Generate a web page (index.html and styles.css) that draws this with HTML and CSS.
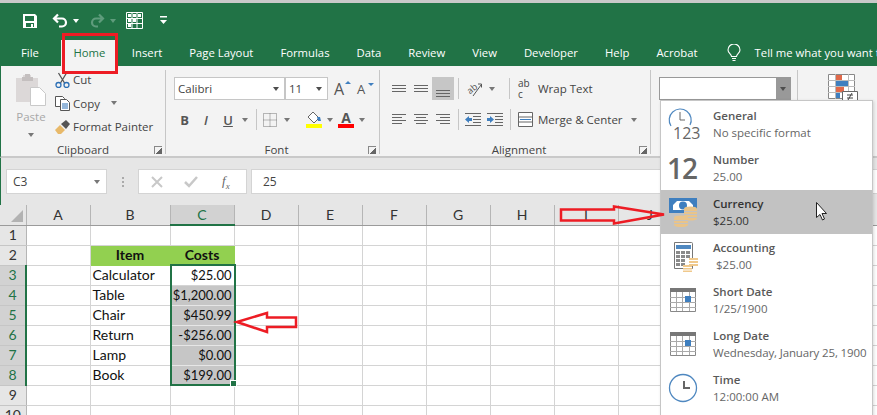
FILE: index.html
```html
<!DOCTYPE html>
<html lang="en">
<head>
<meta charset="utf-8">
<title>Excel number format</title>
<link rel="stylesheet" href="styles.css">
</head>
<body>
<div class="app">
  <div class="topstrip"></div>
  <header class="titlebar">
    <div class="qat">
      <svg class="q-save" width="16" height="16" viewBox="0 0 16 16"><path fill="#fff" d="M1 1h12l2 2v12H1z"/><path fill="#217346" d="M3 3h9v5H3zM4 10h8v4H4z"/><path fill="#fff" d="M9 11h2v3H9z"/></svg>
      <svg class="q-undo" width="17" height="15" viewBox="0 0 17 15"><path fill="none" stroke="#fff" stroke-width="2.200" d="M6 1.500L2 5.500l4 4M2 5.500h8a4 4 0 0 1 0 8H7"/></svg>
      <span class="caret caret-w q-c1"></span>
      <svg class="q-redo" width="15" height="15" viewBox="0 0 15 15"><path fill="none" stroke="#5f9c7c" stroke-width="2.200" d="M9 1.500l4 4-4 4M13 5.500H6a4 4 0 0 0 0 8h2"/></svg>
      <span class="caret caret-d q-c2"></span>
      <svg class="q-grid" width="17" height="17" viewBox="0 0 17 17"><path fill="none" stroke="#fff" d="M.5.500h16v16H.5zM.5 6.500h16M.5 11.500h16M6 .5v16M11 .5v16"/><path fill="#fff" d="M2 2h3v3H2zM7 2h3v3H7zM12 2h3v3h-3zM2 7h3v3H2zM2 12h3v3H2zM7 7h3v3H7z"/></svg>
      <svg class="q-more" width="9" height="9" viewBox="0 0 9 9"><path fill="#fff" d="M1 0h7v1.500H1zM1 4h7L4.500 8z"/></svg>
    </div>
    <nav class="tabs">
      <span class="tab tab-file">File</span>
      <span class="tab tab-home">Home</span>
      <span class="tab">Insert</span>
      <span class="tab">Page Layout</span>
      <span class="tab">Formulas</span>
      <span class="tab">Data</span>
      <span class="tab">Review</span>
      <span class="tab">View</span>
      <span class="tab">Developer</span>
      <span class="tab">Help</span>
      <span class="tab">Acrobat</span>
      <svg class="bulb" width="14" height="18" viewBox="0 0 14 18"><path fill="none" stroke="#fff" stroke-width="1.100" d="M4.500 12.500C4.500 10 1 9 1 6a6 6 0 0 1 12 0c0 3-3.500 4-3.500 6.500zM5 14.500h4M5.500 16.500h3"/></svg>
      <span class="tab tab-tell">Tell me what you want to do</span>
    </nav>
  </header>

  <section class="ribbon">
    <div class="group g-clip">
      <div class="group-body clip-body">
        <div class="paste">
          <svg width="30" height="32" viewBox="0 0 30 32"><path fill="#dcd8d8" d="M0 4h7V1h8v3h7v24H0z"/><path fill="#c4bfbf" d="M9 0h5v3h3v4H6V3h3z"/><path fill="#fff" stroke="#c9c9c9" d="M14.500 13.500h9l6 6v12h-15z"/></svg>
          <span class="paste-label">Paste</span>
          <span class="caret caret-g"></span>
        </div>
        <div class="clip-list">
          <div class="clip-row">
            <svg width="15" height="16" viewBox="0 0 15 16"><path fill="none" stroke="#555" stroke-width="1.300" d="M3.500 1l6 10M11.500 1l-6 10"/><circle cx="3.500" cy="13" r="2.500" fill="none" stroke="#2b6fb5" stroke-width="1.300"/><circle cx="11.500" cy="13" r="2.500" fill="none" stroke="#2b6fb5" stroke-width="1.300"/></svg>
            <span>Cut</span>
          </div>
          <div class="clip-row">
            <svg width="15" height="16" viewBox="0 0 15 16"><path fill="#fff" stroke="#555" d="M.5 1.500h7l2 2v8h-9z"/><path fill="#fff" stroke="#555" d="M5.500 4.500h6l3 3v8h-9z"/><path stroke="#2b6fb5" d="M7 9h6M7 11h6M7 13h6"/></svg>
            <span>Copy</span>
            <span class="caret caret-g copy-caret"></span>
          </div>
          <div class="clip-row">
            <svg width="15" height="16" viewBox="0 0 15 16"><path fill="#e8b96a" d="M0 11l5-5 5 5-4 4H3z"/><path fill="#555" d="M6 5l5-4 4 4-4 5z"/></svg>
            <span>Format Painter</span>
          </div>
        </div>
      </div>
      <div class="group-label">Clipboard<i class="launcher"></i></div>
    </div>

    <div class="group g-font">
      <div class="group-body">
        <div class="tool-row first">
          <div class="combo combo-font">Calibri<span class="caret caret-d"></span></div>
          <div class="combo combo-size">11<span class="caret caret-d"></span></div>
          <span class="grow-a big">A<i class="up"></i></span>
          <span class="grow-a small">A<i class="down"></i></span>
        </div>
        <div class="tool-row second">
          <span class="slot s21 fmt fmt-b">B</span>
          <span class="slot s22 fmt fmt-i">I</span>
          <span class="slot s22 fmt fmt-u">U</span>
          <span class="slot s12"><span class="caret caret-g"></span></span>
          <i class="vsep sep-u"></i>
          <span class="slot s20">
            <svg width="14" height="14" viewBox="0 0 14 14"><path fill="none" stroke="#777" stroke-dasharray="1 1" d="M.5.500h13v13H.5zM7 .5v13M.5 7h13"/></svg>
          </span>
          <span class="slot s12 border-caret"><span class="caret caret-g"></span></span>
          <span class="slot s20 fill-slot">
            <svg width="16" height="17" viewBox="0 0 16 17"><path fill="#fff" stroke="#666" d="M7 1l6 6-5 5-6-6z"/><path fill="#3f7fbf" d="M11 6h3l1 4h-3z"/><path fill="#ff0" d="M0 13h16v4H0z"/></svg>
          </span>
          <span class="slot s12 fill-caret"><span class="caret caret-g"></span></span>
          <span class="slot s20 color-slot">
            <span class="font-color">A</span>
          </span>
          <span class="slot s12 color-caret"><span class="caret caret-g"></span></span>
        </div>
      </div>
      <div class="group-label">Font<i class="launcher"></i></div>
    </div>

    <div class="group g-align">
      <div class="group-body">
        <div class="tool-row first">
          <span class="slot s22"><svg width="14" height="8" viewBox="0 0 14 8"><path stroke="#666" d="M0 .5h14M0 3.500h14M0 6.500h14"/></svg></span>
          <span class="slot s22"><svg width="14" height="8" viewBox="0 0 14 8"><path stroke="#666" d="M0 .5h14M0 3.500h14M0 6.500h14"/></svg></span>
          <span class="slot s22 selected"><svg class="down-lines" width="14" height="8" viewBox="0 0 14 8"><path stroke="#666" d="M0 .5h14M0 3.500h14M0 6.500h14"/></svg></span>
          <i class="vsep"></i>
          <span class="slot s24"><svg class="orient" width="17" height="16" viewBox="0 0 17 16"><text class="ab-text" x="1" y="11" transform="rotate(-40 6 8)">ab</text><path fill="none" stroke="#555" d="M7 15L15 4M12 3h3.500v3.500"/></svg></span>
          <span class="slot s12 orient-caret"><span class="caret caret-g"></span></span>
          <i class="vsep sep-wrap"></i>
          <div class="text-btn wrap-btn">
            <span class="wrap-ic">ab<span class="wrap-c">c</span></span>
            <span>Wrap Text</span>
          </div>
        </div>
        <div class="tool-row second">
          <span class="slot s22"><svg width="14" height="11" viewBox="0 0 14 11"><path stroke="#666" d="M0 .5h14M0 3.500h10M0 6.500h14M0 9.500h10"/></svg></span>
          <span class="slot s22"><svg width="14" height="11" viewBox="0 0 14 11"><path stroke="#666" d="M0 .5h14M2 3.500h10M0 6.500h14M2 9.500h10"/></svg></span>
          <span class="slot s22"><svg width="14" height="11" viewBox="0 0 14 11"><path stroke="#666" d="M0 .5h14M4 3.500h10M0 6.500h14M4 9.500h10"/></svg></span>
          <i class="vsep"></i>
          <span class="slot s22"><svg width="16" height="13" viewBox="0 0 16 13"><path stroke="#666" d="M0 .5h16M8 3.500h8M8 6.500h8M8 9.500h8M0 12.500h16"/><path fill="#3f7fbf" d="M0 6.500L4 3v2h3v3H4v2z"/></svg></span>
          <span class="slot s22"><svg width="16" height="13" viewBox="0 0 16 13"><path stroke="#666" d="M0 .5h16M8 3.500h8M8 6.500h8M8 9.500h8M0 12.500h16"/><path fill="#3f7fbf" d="M7 6.500L3 3v2H0v3h3v2z"/></svg></span>
          <i class="vsep sep-merge"></i>
          <div class="text-btn merge-btn">
            <svg width="15" height="15" viewBox="0 0 15 15"><path fill="#fff" stroke="#666" d="M.5.500h14v14H.5zM.5 5h14M.5 10h14"/><path stroke="#3f7fbf" d="M2 7.500h11"/></svg>
            <span>Merge &amp; Center</span>
            <span class="caret caret-g merge-caret"></span>
          </div>
        </div>
      </div>
      <div class="group-label">Alignment<i class="launcher"></i></div>
    </div>

    <div class="group g-num">
      <div class="group-body">
        <div class="tool-row first">
          <div class="num-combo"><span class="num-drop"><span class="caret caret-d"></span></span></div>
        </div>
      </div>
    </div>

    <div class="g-styles">
      <svg width="30" height="28" viewBox="0 0 30 28"><path fill="#fff" stroke="#888" d="M.5.500h26v24H.5z"/><path fill="#e0694a" d="M8 1h6v5H8zM8 13h8v5H8z"/><path fill="#3f7fbf" d="M8 7h12v5H8zM8 19h4v5H8z"/><path stroke="#bbb" d="M7.500 0v25M20.500 0v25M0 6.500h27M0 12.500h27M0 18.500h27"/><path fill="#fff" stroke="#666" d="M14.500 17.500h15v11h-15z"/><path stroke="#444" d="M19 21h6M19 24h6M24 19l-4 7"/></svg>
    </div>
  </section>

  <section class="formula">
    <div class="namebox">C3<span class="caret caret-g"></span></div>
    <span class="dots"></span>
    <div class="fx-btns">
      <svg width="12" height="12" viewBox="0 0 12 12"><path stroke="#c8c8c8" stroke-width="2" d="M1 1l10 10M11 1L1 11"/></svg>
      <svg width="14" height="12" viewBox="0 0 14 12"><path fill="none" stroke="#c8c8c8" stroke-width="2.500" d="M1 6l4 4 8-9"/></svg>
      <span class="fx">f<sub>x</sub></span>
    </div>
    <div class="fx-input">25</div>
  </section>

  <section class="sheet">
    <table class="grid">
      <colgroup>
        <col class="c-row"><col class="c-a"><col class="c-b"><col class="c-n"><col class="c-n"><col class="c-n"><col class="c-n"><col class="c-n"><col class="c-n"><col class="c-n"><col class="c-n"><col class="c-rest">
      </colgroup>
      <thead>
        <tr>
          <th class="corner"><i class="corner-tri"></i></th><th>A</th><th>B</th><th class="col-sel">C</th><th>D</th><th>E</th><th>F</th><th>G</th><th>H</th><th>I</th><th>J</th><th></th>
        </tr>
      </thead>
      <tbody>
        <tr><th>1</th><td></td><td></td><td></td><td></td><td></td><td></td><td></td><td></td><td></td><td></td><td></td></tr>
        <tr><th>2</th><td></td><td class="hd">Item</td><td class="hd">Costs</td><td></td><td></td><td></td><td></td><td></td><td></td><td></td><td></td></tr>
        <tr><th class="row-sel">3</th><td></td><td>Calculator</td><td class="num">$25.00</td><td></td><td></td><td></td><td></td><td></td><td></td><td></td><td></td></tr>
        <tr><th class="row-sel">4</th><td></td><td>Table</td><td class="num sel">$1,200.00</td><td></td><td></td><td></td><td></td><td></td><td></td><td></td><td></td></tr>
        <tr><th class="row-sel">5</th><td></td><td>Chair</td><td class="num sel">$450.99</td><td></td><td></td><td></td><td></td><td></td><td></td><td></td><td></td></tr>
        <tr><th class="row-sel">6</th><td></td><td>Return</td><td class="num sel">-$256.00</td><td></td><td></td><td></td><td></td><td></td><td></td><td></td><td></td></tr>
        <tr><th class="row-sel">7</th><td></td><td>Lamp</td><td class="num sel">$0.00</td><td></td><td></td><td></td><td></td><td></td><td></td><td></td><td></td></tr>
        <tr><th class="row-sel">8</th><td></td><td>Book</td><td class="num sel">$199.00</td><td></td><td></td><td></td><td></td><td></td><td></td><td></td><td></td></tr>
        <tr><th>9</th><td></td><td></td><td></td><td></td><td></td><td></td><td></td><td></td><td></td><td></td><td></td></tr>
        <tr><th>10</th><td></td><td></td><td></td><td></td><td></td><td></td><td></td><td></td><td></td><td></td><td></td></tr>
      </tbody>
    </table>
    <div class="selection"><i class="handle"></i></div>
  </section>

  <div class="menu">
    <div class="item">
      <div class="ic">
        <svg width="32" height="32" viewBox="0 0 32 32"><path fill="none" stroke="#4f88c0" stroke-width="1.200" d="M4 18a11 11 0 1 1 19-1"/><path fill="none" stroke="#666" d="M13 4v8h5"/></svg>
        <span class="ic-123">123</span>
      </div>
      <div class="tx"><b>General</b><span>No specific format</span></div>
    </div>
    <div class="item">
      <div class="ic"><span class="ic-12">12</span></div>
      <div class="tx"><b>Number</b><span>25.00</span></div>
    </div>
    <div class="item current">
      <div class="ic">
        <svg width="32" height="32" viewBox="0 0 32 32"><path fill="#3f7fbf" d="M2 2h28v15H2z"/><path fill="#fff" d="M6 5h20v9H6z"/><path fill="#3f7fbf" d="M5 5h5l-5 5zM27 5h-5l5 5z"/><circle cx="16" cy="9.500" r="4" fill="#3f7fbf"/><path fill="#e9c48a" d="M17 12.500a6.500 2 0 0 1 13 0v10a6.500 2 0 0 1-13 0z"/><path stroke="#c2c2c2" d="M17 15.500h13M17 18.500h13M17 21.500h13"/><path fill="#e9c48a" d="M7 21.500a7 2 0 0 1 14 0v7.500a7 2 0 0 1-14 0z"/><path stroke="#c2c2c2" d="M7 24.500h14M7 27.500h14"/></svg>
      </div>
      <div class="tx"><b>Currency</b><span>$25.00</span></div>
    </div>
    <div class="item">
      <div class="ic">
        <svg width="32" height="32" viewBox="0 0 32 32"><path fill="#fff" stroke="#777" d="M7.500 2.500h17a1 1 0 0 1 1 1v25h-18z"/><path fill="#4f88c0" d="M9 5h15v4H9z"/><path fill="#8a8a8a" d="M9 11h4v3H9zM14 11h4v3h-4zM19 11h4v3h-4zM9 15h4v3H9zM14 15h4v3h-4zM19 15h4v3h-4zM9 19h4v3H9zM14 19h4v3h-4zM9 23h4v3H9zM14 23h4v3h-4z"/><path fill="#f0c98c" d="M22 18h9v8h-9zM16 25h9v7h-9z"/><path stroke="#fff" d="M22 20.500h9M22 23.500h9M16 27.500h9M16 30h9"/></svg>
      </div>
      <div class="tx"><b>Accounting</b><span>&nbsp;$25.00</span></div>
    </div>
    <div class="item">
      <div class="ic">
        <svg width="32" height="32" viewBox="0 0 32 32"><path fill="#fff" stroke="#888" d="M3.500 4.500h25v23h-25z"/><path fill="#777" d="M3 4h26v4H3z"/><path stroke="#aaa" d="M3 13.500h26M3 18.500h26M3 23.500h26M9.500 8v19M15.500 8v19M22.500 8v19"/><path fill="#3f7fbf" d="M18 12h6v6h-6z"/></svg>
      </div>
      <div class="tx"><b>Short Date</b><span>1/25/1900</span></div>
    </div>
    <div class="item">
      <div class="ic">
        <svg width="32" height="32" viewBox="0 0 32 32"><path fill="#fff" stroke="#888" d="M3.500 4.500h25v23h-25z"/><path fill="#777" d="M3 4h26v4H3z"/><path stroke="#aaa" d="M3 13.500h26M3 18.500h26M3 23.500h26M9.500 8v19M15.500 8v19M22.500 8v19"/><path fill="#3f7fbf" d="M18 12h6v6h-6z"/></svg>
      </div>
      <div class="tx"><b>Long Date</b><span class="tight">Wednesday, January 25, 1900</span></div>
    </div>
    <div class="item">
      <div class="ic">
        <svg width="32" height="32" viewBox="0 0 32 32"><circle cx="16" cy="16" r="13.500" fill="#fff" stroke="#4f88c0" stroke-width="1.300"/><path fill="none" stroke="#666" stroke-width="2" d="M17 9v7h6"/></svg>
      </div>
      <div class="tx"><b>Time</b><span>12:00:00 AM</span></div>
    </div>
  </div>

  <svg class="marks" width="877" height="415" viewBox="0 0 877 415">
    <path class="mark" d="M63.500 34.500h53v38h-53z"/>
    <path class="arrow" d="M561 209.500h53v-3l50 8-50 9v-3h-53z"/>
    <path class="arrow" d="M237 322l30-9v4.500h29v9.500h-29v5z"/>
    <path fill="#fff" stroke="#222" d="M816.500 202.500v15l3.500-3 2.500 5.500 2-1-2.500-5.500h4.500z"/>
  </svg>
</div>
</body>
</html>
```

FILE: styles.css
```css
* { box-sizing: border-box; }
html, body { margin: 0; padding: 0; }
body { width: 877px; height: 415px; overflow: hidden; background: #fff; font-family: "Open Sans", "Liberation Sans", sans-serif; font-size: 11.500px; color: #444; }
.app { position: relative; width: 877px; height: 415px; overflow: hidden; }

.topstrip { height: 3px; background: #c9c9c9; }
.titlebar { height: 63px; background: #217346; color: #fff; display: flex; flex-direction: column; }
.qat { height: 37px; display: flex; align-items: center; position: relative; padding-left: 22px; padding-bottom: 2px; }
.q-undo { margin-left: 14px; }
.q-c1 { margin-left: 4px; }
.q-redo { margin-left: 11px; }
.q-c2 { margin-left: 5px; }
.q-grid { margin-left: 10px; }
.q-more { margin-left: 16px; }

.tabs { flex: 1; display: flex; align-items: center; padding-left: 7.500px; overflow: hidden; font-size: 11.300px; }
.tab { padding: 0 13.500px; color: #fff; white-space: nowrap; line-height: 26px; flex: none; }
.tab-home { background: #f3f3f3; color: #217346; padding: 0 13px 0 12px; margin: 0 0 0 9px; height: 26px; }
.bulb { margin-left: 16px; flex: none; }
.tab-tell { padding-left: 13.500px; }

.caret { display: inline-block; width: 0; height: 0; border-left: 3.500px solid transparent; border-right: 3.500px solid transparent; border-top: 4px solid #666; }
.caret-w { border-top-color: #fff; }
.caret-d { border-top-color: #4d4d4d; }
.caret-g { border-top-color: #777; }
.q-c2.caret-d { border-top-color: #5f9c7c; }

.ribbon { height: 92px; background: #f3f3f3; border-bottom: 2px solid #c9c9c9; border-left: 1px solid #217346; padding-top: 4px; display: flex; }
.group { height: 84px; border-right: 1px solid #c6c6c6; display: flex; flex-direction: column; flex: none; }
.g-clip { width: 165px; }
.g-font { width: 214px; padding-left: 8px; }
.g-align { width: 271px; padding-left: 8px; }
.g-num { width: 147px; padding-left: 8px; }
.g-styles { padding: 4px 0 0 30px; }
.group-body { height: 73px; }
.group-label { height: 11px; line-height: 14px; text-align: center; position: relative; color: #444; }
.launcher { position: absolute; right: 3px; top: 3px; width: 8px; height: 8px; border-left: 1px solid #888; border-top: 1px solid #888; background: linear-gradient(135deg, transparent 55%, #666 55%); }

.clip-body { display: flex; }
.paste { width: 32px; margin-left: 14px; padding-top: 4px; display: flex; flex-direction: column; align-items: center; }
.paste-label { color: #a8a8a8; line-height: 16px; margin-top: 3px; }
.paste .caret { margin-top: 8px; }
.clip-list { margin-left: 8px; margin-top: -2px; display: flex; flex-direction: column; }
.clip-row { height: 23.500px; display: flex; align-items: center; gap: 3px; white-space: nowrap; }
.copy-caret { margin-left: 8px; }

.tool-row { display: flex; align-items: center; height: 23px; }
.first { margin-top: 7px; }
.second { margin-top: 8px; }
.combo { height: 23px; background: #fff; border: 1px solid #c6c6c6; display: flex; align-items: center; justify-content: space-between; padding: 0 5px 0 3px; }
.combo-font { width: 111px; }
.combo-size { width: 43px; }
.grow-a { position: relative; display: block; color: #555; }
.grow-a.big { font-size: 16px; margin-left: 6px; width: 23px; }
.grow-a.small { font-size: 13px; width: 16px; }
.grow-a i { position: absolute; top: 3px; left: 11px; border-left: 3px solid transparent; border-right: 3px solid transparent; }
.up { border-bottom: 3px solid #3f7fbf; }
.down { border-top: 3px solid #3f7fbf; }

.slot { display: flex; align-items: center; justify-content: center; height: 23px; flex: none; }
.s12 { width: 12px; }
.s20 { width: 20px; }
.s21 { width: 21px; }
.s22 { width: 22px; }
.s24 { width: 24px; }
.fmt { font-size: 13px; color: #555; }
.fmt-b { font-weight: 700; }
.fmt-i { font-style: italic; font-weight: 600; }
.fmt-u { text-decoration: underline; font-weight: 600; }
.vsep { display: block; width: 1px; height: 21px; background: #c6c6c6; margin: 0 3px 0 4px; flex: none; }
.sep-u { margin-left: 5px; margin-right: 3px; }
.border-caret { margin-left: 1px; }
.fill-slot { margin-left: 11px; }
.font-color { display: block; font-weight: 700; font-size: 14px; line-height: 13px; width: 16px; text-align: center; color: #555; border-bottom: 4px solid #f00; }
.selected { background: #c6c6c6; }
.down-lines { margin-top: 10px; }
.orient { overflow: visible; }
.ab-text { font: 9px "Open Sans", sans-serif; fill: #555; }
.sep-wrap { margin-left: 11px; margin-right: 8px; }
.sep-merge { margin-left: 4px; margin-right: 7px; }
.text-btn { display: flex; align-items: center; gap: 5px; white-space: nowrap; }
.wrap-btn { gap: 6px; }
.wrap-ic { display: block; font-size: 10px; line-height: 11px; width: 14px; }
.wrap-c { display: block; }
.merge-caret { margin-left: 3px; }

.num-combo { width: 132px; height: 23px; background: #fff; border: 1px solid #999; display: flex; justify-content: flex-end; }
.num-drop { width: 14px; background: #999; display: flex; align-items: center; justify-content: center; }

.formula { height: 47px; background: #e6e6e6; border-left: 1px solid #217346; padding: 11px 0 0 5px; display: flex; align-items: flex-start; }
.namebox { width: 101px; height: 25px; background: #fff; border: 1px solid #d4d4d4; display: flex; align-items: center; justify-content: space-between; padding: 0 6px; font-size: 12px; }
.dots { width: 2px; height: 10px; margin: 8px 14px 0 15px; background: repeating-linear-gradient(#aaa 0 2px, transparent 2px 4px); }
.fx-btns { width: 109px; height: 25px; background: #fff; border: 1px solid #d4d4d4; display: flex; align-items: center; gap: 21px; padding-left: 12px; }
.fx { font-family: "Liberation Serif", serif; font-style: italic; font-size: 13px; color: #666; margin-left: 3px; }
.fx sub { font-size: 9px; }
.fx-input { flex: 1; height: 25px; margin-left: 4px; background: #fff; border: 1px solid #d4d4d4; border-right: 0; line-height: 23px; padding-left: 11px; font-size: 12px; }

.sheet { position: relative; height: 210px; overflow: hidden; }
.grid { border-collapse: collapse; table-layout: fixed; width: 877px; font-family: Lato, "Liberation Sans", sans-serif; font-size: 14px; color: #111; }
.c-row { width: 26px; }
.c-a { width: 64px; }
.c-b { width: 80px; }
.c-n { width: 64px; }
.c-rest { width: 195px; }
.grid tr { height: 20px; }
.grid td { padding: 0 2px; border: 1px solid #d4d4d4; overflow: hidden; white-space: nowrap; line-height: 18px; }
.grid th { background: #e6e6e6; font-weight: 400; color: #333; padding: 0; border-right: 1px solid #b5b5b5; border-bottom: 1px solid #c6c6c6; line-height: 18px; font-size: 14px; }
.grid thead th { border-bottom: 1px solid #9b9b9b; border-top: 0; }
.corner { position: relative; }
.corner-tri { position: absolute; right: 3px; bottom: 3px; width: 0; height: 0; border-left: 12px solid transparent; border-bottom: 12px solid #b2b2b2; }
.grid th.col-sel { background: #d2d2d2; color: #217346; border-bottom: 2px solid #217346; }
.grid th.row-sel { background: #d2d2d2; color: #217346; border-right: 2px solid #217346; }
.grid td.hd { background: #92d050; font-weight: 700; text-align: center; border-color: #92d050; }
.grid td.num { text-align: right; font-size: 13px; }
.grid td.sel { background: #c6c6c6; border-color: #e6e6e6; }

.selection { position: absolute; left: 170px; top: 59px; width: 66px; height: 122px; border: 2px solid #217346; pointer-events: none; }
.handle { position: absolute; right: -3px; bottom: -3px; width: 7px; height: 7px; background: #217346; border: 1px solid #fff; }

.menu { position: absolute; left: 660px; top: 100px; width: 213px; height: 320px; background: #fff; border: 1px solid #c6c6c6; padding-top: 1px; box-shadow: 1px 1px 3px rgba(0,0,0,.15); }
.item { height: 44px; display: flex; }
.current { background: #c2c2c2; }
.ic { width: 52px; padding: 6px 0 0 6px; position: relative; flex: none; }
.ic svg { display: block; }
.ic-123 { position: absolute; left: 12px; top: 21px; font-size: 16px; line-height: 20px; color: #666; }
.ic-12 { position: absolute; left: 6px; top: 2px; font-size: 28px; font-weight: 600; letter-spacing: -1px; line-height: 40px; color: #666; }
.tx { display: flex; flex-direction: column; padding-top: 5px; color: #666; white-space: nowrap; }
.tx b { font-weight: 600; line-height: 17px; color: #595959; }
.tx span { line-height: 17px; }
.tight { letter-spacing: -.14px; }
.current .tx { color: #333; }
.current .tx b { color: #333; }

.marks { position: absolute; left: 0; top: 0; pointer-events: none; }
.mark { fill: none; stroke: #ed1c24; stroke-width: 3; }
.arrow { fill: none; stroke: #ed1c24; stroke-width: 2.500; }
```
